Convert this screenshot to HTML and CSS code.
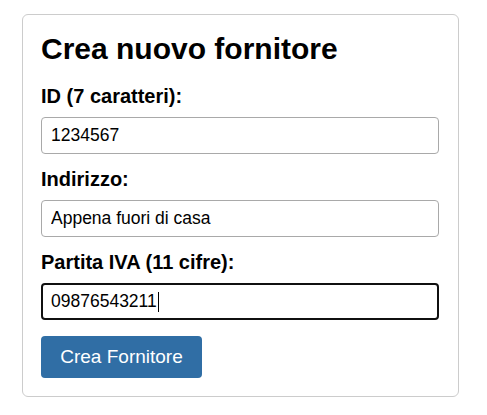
FILE: index.html
```html
<!DOCTYPE html>
<html lang="it">
<head>
<meta charset="utf-8">
<title>Crea nuovo fornitore</title>
<link rel="stylesheet" href="styles.css">
</head>
<body>
<form class="card">
  <h2 class="title">Crea nuovo fornitore</h2>
  <label class="label" for="id">ID (7 caratteri):</label>
  <input class="field" id="id" type="text" value="1234567">
  <label class="label" for="addr">Indirizzo:</label>
  <input class="field" id="addr" type="text" value="Appena fuori di casa">
  <label class="label" for="piva">Partita IVA (11 cifre):</label>
  <div class="field field-focus">09876543211<span class="caret"></span></div>
  <button class="btn" type="button">Crea Fornitore</button>
</form>
</body>
</html>
```

FILE: styles.css
```css
html, body {
  margin: 0;
  padding: 0;
  background: #ffffff;
}
body {
  font-family: "Liberation Sans", Arial, sans-serif;
  color: #000;
}
.card {
  box-sizing: border-box;
  width: 437px;
  margin: 14px 0 0 22px;
  padding: 17px 18px 18px;
  border: 1px solid #cccccc;
  border-radius: 6px;
  display: flex;
  flex-direction: column;
  align-items: flex-start;
}
.title {
  margin: 0 0 21px;
  font-size: 30px;
  font-weight: bold;
  line-height: 33px;
}
.label {
  display: block;
  font-size: 20px;
  font-weight: bold;
  line-height: 21px;
  margin: 0 0 10px;
}
.field {
  box-sizing: border-box;
  width: 398px;
  height: 37px;
  margin: 0 0 15px;
  padding: 0 9px;
  border: 1px solid #a9a9a9;
  border-radius: 4px;
  font-family: "Liberation Sans", Arial, sans-serif;
  font-size: 17.5px;
  color: #000;
  background: #fff;
  outline: none;
}
.field-focus {
  display: flex;
  align-items: center;
  border: 2px solid #101010;
  padding: 0 8px;
}
.caret {
  display: inline-block;
  width: 1px;
  height: 20px;
  background: #000;
  margin-left: 1px;
}
.btn {
  margin-top: 1px;
  box-sizing: border-box;
  width: 161px;
  height: 42px;
  padding: 0;
  border: none;
  border-radius: 4px;
  background: #306ea5;
  color: #fff;
  font-family: "Liberation Sans", Arial, sans-serif;
  font-size: 19px;
}
```
